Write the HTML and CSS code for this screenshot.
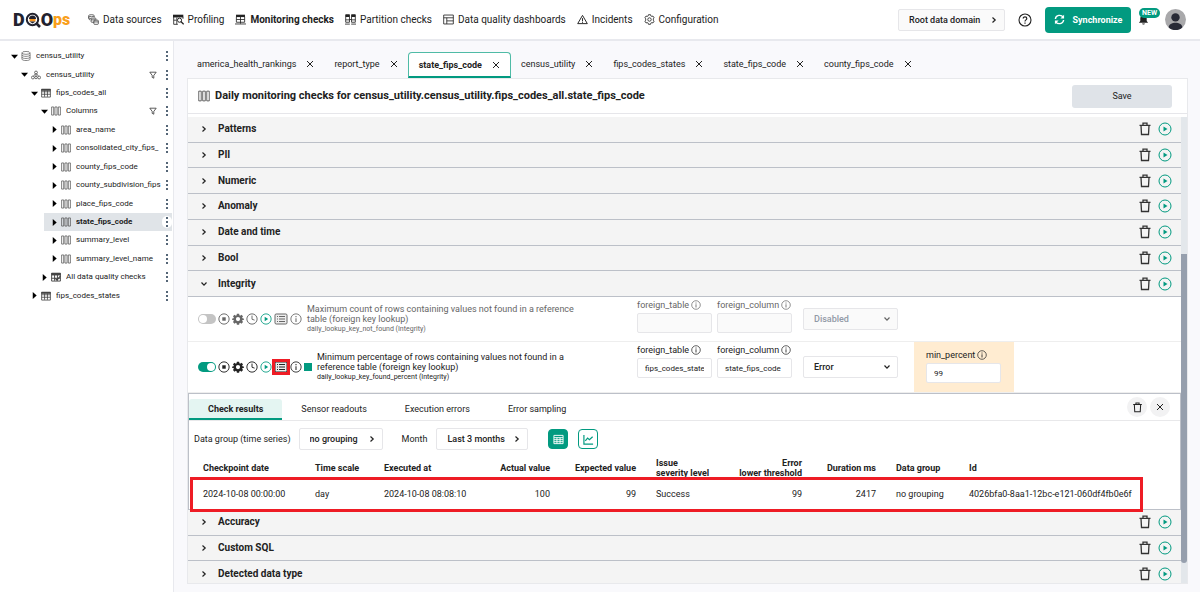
FILE: index.html
```html
<!DOCTYPE html>
<html lang="en">
<head>
<meta charset="utf-8">
<title>DQOps - Monitoring checks</title>
<meta name="viewport" content="width=device-width, initial-scale=1">
<link rel="stylesheet" href="styles.css">
</head>
<body>
<svg class="sprite" aria-hidden="true">
  <symbol id="sources" viewBox="0 0 16 16"><g fill="none" stroke="currentColor"><path d="M3 8.500C1.500 8 1 7.500 1 7V2.500C1 .5 9 .5 9 2.500V5M1 2.500C1 4.500 9 4.500 9 2.500M1 5c0 1 1.500 1.500 3 1.600"/><rect x="4.500" y="6" width="7" height="6" rx="1"/><rect x="8.500" y="9" width="6.500" height="6" rx="1" fill="#fff"/><path d="M4.500 8.500h6M8.500 11.500H15"/></g></symbol>
  <symbol id="profiling" viewBox="0 0 16 16"><path d="M0 1h15v4H0z" fill="currentColor"/><path d="M1 4v11h6M1 9h4M5.500 5v10M14.500 4v3" fill="none" stroke="currentColor" stroke-width="1.200"/><circle cx="9.500" cy="9" r="3" fill="#fff" stroke="currentColor" stroke-width="1.400"/><path d="m11.500 11 4 4" stroke="currentColor" stroke-width="2"/></symbol>
  <symbol id="monitoring" viewBox="0 0 16 16"><path d="M1.500 1h13v3.500h-13z" fill="currentColor"/><path d="M2 4v8h12V4M2 8h12M8 4v10M0 14.500h16" fill="none" stroke="currentColor" stroke-width="1.200"/></symbol>
  <symbol id="partition" viewBox="0 0 16 16"><path d="M1 1h5.500v3.500H1zM9.500 1H15v3.500H9.500z" fill="currentColor"/><path d="M1 1h5.500v11H1zM9.500 1H15v11H9.500zM1 8.500h5.500M9.500 8.500H15M0 14.700h7M9 14.700h7M6.500 8h3" fill="none" stroke="currentColor" stroke-width="1.200"/></symbol>
  <symbol id="dashboard" viewBox="0 0 16 16"><path d="M1 1.500h14v13H1zM1 5.500h14M5.500 5.500v9M5.500 10H15" fill="none" stroke="currentColor" stroke-width="1.200"/></symbol>
  <symbol id="incident" viewBox="0 0 16 16"><path d="M8 2 15 14H1zM8 6v4.500M8 11.300v1.500" fill="none" stroke="currentColor" stroke-width="1.400"/></symbol>
  <symbol id="config" viewBox="0 0 16 16"><path d="M6.500 1h3l.5 1.800 1.300.7 1.800-.5 1.600 2.600L13.500 7v2l1.200 1.400-1.600 2.600-1.800-.5-1.300.7-.5 1.800h-3L6 13.200l-1.300-.7-1.800.5-1.600-2.600L2.500 9V7L1.300 5.600 2.900 3l1.800.5L6 2.800z" fill="none" stroke="currentColor" stroke-width="1.200"/><circle cx="8" cy="8" r="2.500" fill="none" stroke="currentColor" stroke-width="1.200"/></symbol>
  <symbol id="gear" viewBox="0 0 16 16"><path fill="currentColor" fill-rule="evenodd" d="M6.500 1h3l.4 2 1 .5 1.700-1.200 2.100 2.100-1.200 1.700.5 1 2 .4v1.500l-2 .4-.5 1 1.200 1.700-2.100 2.100-1.700-1.200-1 .5-.4 2h-3l-.4-2-1-.5-1.700 1.200-2.100-2.100 1.200-1.700-.5-1-2-.4V7.500l2-.4.5-1-1.200-1.700 2.100-2.100 1.700 1.200 1-.5zM8 5.300a2.800 2.800 0 1 0 0 5.600 2.800 2.800 0 0 0 0-5.600z"/></symbol>
  <symbol id="database" viewBox="0 0 16 16"><g fill="none" stroke="currentColor"><ellipse cx="8" cy="3" rx="6.500" ry="2.300"/><path d="M1.500 3v10c0 3 13 3 13 0V3M1.500 6.300c0 3 13 3 13 0M1.500 9.700c0 3 13 3 13 0"/></g></symbol>
  <symbol id="schema" viewBox="0 0 16 16"><g fill="none" stroke="currentColor" stroke-width="1.200"><circle cx="8" cy="4" r="2.300"/><circle cx="3" cy="12" r="2.300"/><circle cx="8" cy="12" r="2"/><circle cx="13" cy="12" r="2.300"/><path d="M8 6v4M7 6 4 10M9 6l3 4"/></g></symbol>
  <symbol id="table" viewBox="0 0 16 16"><path d="M.5 1.500h15v3H.5z" fill="currentColor"/><path d="M1 2h14v12.500H1zM1 6h14M1 10h14M5.700 4v10M10.300 4v10" fill="none" stroke="currentColor" stroke-width="1.300"/></symbol>
  <symbol id="checks" viewBox="0 0 16 16"><path d="M.5 1.500h15v4H.5z" fill="currentColor"/><path d="M1 2h14v12.500H1zM1 10h14M5.700 4v10M10.300 4v10" fill="none" stroke="currentColor" stroke-width="1.500"/><path d="m7 10 2.500 3L15 6.500" fill="none" stroke="currentColor" stroke-width="2"/></symbol>
  <symbol id="columns" viewBox="0 0 16 16"><path d="M1 1.500h3.300v13H1zM6.300 1.500h3.400v13H6.300zM11.700 1.500H15v13h-3.300z" fill="none" stroke="currentColor" stroke-width="1.100"/></symbol>
  <symbol id="down" viewBox="0 0 8 8"><path d="M0 2h8L4 6.500z"/></symbol>
  <symbol id="right" viewBox="0 0 8 8"><path d="M2 0v8L6.500 4z"/></symbol>
  <symbol id="filter" viewBox="0 0 10 10"><path d="M1 1.500h8L6 5.500V9L4 8V5.500z" fill="none" stroke="currentColor"/></symbol>
  <symbol id="dots" viewBox="0 0 4 12"><path d="M1 1h2v2H1zM1 5h2v2H1zM1 9h2v2H1z" fill="currentColor"/></symbol>
  <symbol id="close" viewBox="0 0 8 8"><path d="m1 1 6 6M7 1 1 7" stroke="currentColor"/></symbol>
  <symbol id="chevron" viewBox="0 0 10 10"><path d="m3.500 2.500 2.700 2.500-2.700 2.500" fill="none" stroke="currentColor" stroke-width="1.200"/></symbol>
  <symbol id="chevron-down" viewBox="0 0 10 10"><path d="M2.500 3.500 5 6.200l2.500-2.700" fill="none" stroke="currentColor" stroke-width="1.200"/></symbol>
  <symbol id="trash" viewBox="0 0 14 14"><path d="M1.500 3.300h11M5 3V1.200h4V3M3 3.500l.5 9h7l.5-9" fill="none" stroke="currentColor" stroke-width="1.300"/></symbol>
  <symbol id="play" viewBox="0 0 14 14"><circle cx="7" cy="7" r="6" fill="none" stroke="currentColor"/><path d="M5.500 4.500v5L9.500 7z" fill="currentColor"/></symbol>
  <symbol id="stop" viewBox="0 0 14 14"><circle cx="7" cy="7" r="6" fill="none" stroke="currentColor" stroke-width="1.100"/><path d="M5 5h4v4H5z" fill="currentColor"/></symbol>
  <symbol id="clock" viewBox="0 0 14 14"><path d="M7 3v4.300l3 1" fill="none" stroke="currentColor" stroke-width="1.100"/><circle cx="7" cy="7" r="6" fill="none" stroke="currentColor" stroke-width="1.100"/></symbol>
  <symbol id="list" viewBox="0 0 14 12"><rect x="1" y="1" width="12" height="10" rx="1.200" fill="#eee" stroke="currentColor"/><path d="M3 3.500h1M5 3.500h6M3 6h1M5 6h6M3 8.500h1M5 8.500h6" stroke="currentColor"/></symbol>
  <symbol id="info" viewBox="0 0 14 14"><circle cx="7" cy="7" r="6" fill="none" stroke="currentColor"/><path d="M7 6v4.500M7 3.500V5" stroke="currentColor" stroke-width="1.200"/></symbol>
  <symbol id="chart" viewBox="0 0 12 12"><path d="M1 1v10h10M2.500 7.500l2.500-3 2 1.800L10.500 3" fill="none" stroke="currentColor" stroke-width="1.300"/></symbol>
  <symbol id="grid" viewBox="0 0 12 12"><path d="M1 1.500h10v9H1zM1 4h10M1 6.200h10M1 8.400h10M4.300 4v6.500M7.700 4v6.500" fill="none" stroke="currentColor"/></symbol>
  <symbol id="sync" viewBox="0 0 12 12"><path d="M1.500 5.500C2 .8 8 .3 10 3.500M10.500 6.500C10 11.200 4 11.700 2 8.500" fill="none" stroke="currentColor" stroke-width="1.500"/><path d="M11 .8v4H7zM1 11.200v-4h4z" fill="currentColor"/></symbol>
  <symbol id="help" viewBox="0 0 14 14"><circle cx="7" cy="7" r="6" fill="none" stroke="currentColor" stroke-width="1.100"/><path d="M5.200 5.500c0-2.300 3.600-2.300 3.600 0C8.800 7 7 6.800 7 8.500M7 9.500v1.300" fill="none" stroke="currentColor" stroke-width="1.200"/></symbol>
  <symbol id="bell" viewBox="0 0 12 12"><path d="M1 9.500 2.500 7.500V4.500c0-4 7-4 7 0v3L11 9.500zM4.500 10.300h3c0 1.600-3 1.600-3 0z" fill="currentColor"/></symbol>
  <symbol id="avatar" viewBox="0 0 20 20"><circle cx="10" cy="10" r="10" fill="#a9a9ab"/><circle cx="10" cy="8" r="4" fill="#282a36"/><path d="M3.500 17.500c0-6 13-6 13 0C13 20.800 7 20.800 3.500 17.500z" fill="#282a36"/></symbol>
</svg>

<header class="topbar">
  <a class="logo" href="#" aria-label="DQOps home">
    <span>D</span><svg class="logo-q" viewBox="0 0 16 16"><circle cx="7.500" cy="7.500" r="5.700" fill="#fff" stroke="#22222e" stroke-width="2"/><path d="M4 7a3.500 3.500 0 0 1 7 0z" fill="#22222e"/><path d="M4.500 7h6v2.500h-6z" fill="#f7941d"/><path d="M4.500 9.500h6l-3 2z" fill="#22222e"/><path d="m11 11 4 4" stroke="#22222e" stroke-width="2.600"/></svg><span>O</span><span class="logo-ps">ps</span>
  </a>
  <nav class="nav">
    <a href="#"><svg><use href="#sources"/></svg>Data sources</a>
    <a href="#"><svg><use href="#profiling"/></svg>Profiling</a>
    <a href="#" class="active"><svg><use href="#monitoring"/></svg>Monitoring checks</a>
    <a href="#"><svg><use href="#partition"/></svg>Partition checks</a>
    <a href="#"><svg><use href="#dashboard"/></svg>Data quality dashboards</a>
    <a href="#"><svg><use href="#incident"/></svg>Incidents</a>
    <a href="#"><svg><use href="#config"/></svg>Configuration</a>
  </nav>
  <div class="tools">
    <div class="select domain"><select aria-label="Data domain"><option>Root data domain</option></select><svg><use href="#chevron"/></svg></div>
    <button class="icon-btn help" aria-label="Help"><svg><use href="#help"/></svg></button>
    <button class="sync"><svg><use href="#sync"/></svg>Synchronize</button>
    <button class="icon-btn bell" aria-label="Notifications"><svg><use href="#bell"/></svg><span class="badge">NEW</span></button>
    <button class="icon-btn avatar" aria-label="Account"><svg><use href="#avatar"/></svg></button>
  </div>
</header>

<div class="body">
  <aside class="sidebar">
    <ul class="tree">
      <li class="d0"><svg class="arrow"><use href="#down"/></svg><svg class="kind"><use href="#database"/></svg><a href="#">census_utility</a><button aria-label="Menu"><svg class="dots"><use href="#dots"/></svg></button></li>
      <li class="d1"><svg class="arrow"><use href="#down"/></svg><svg class="kind"><use href="#schema"/></svg><a href="#">census_utility</a><button aria-label="Filter"><svg class="filter"><use href="#filter"/></svg></button><button aria-label="Menu"><svg class="dots"><use href="#dots"/></svg></button></li>
      <li class="d2"><svg class="arrow"><use href="#down"/></svg><svg class="kind"><use href="#table"/></svg><a href="#">fips_codes_all</a><button aria-label="Menu"><svg class="dots"><use href="#dots"/></svg></button></li>
      <li class="d3"><svg class="arrow"><use href="#down"/></svg><svg class="kind"><use href="#columns"/></svg><a href="#">Columns</a><button aria-label="Filter"><svg class="filter"><use href="#filter"/></svg></button><button aria-label="Menu"><svg class="dots"><use href="#dots"/></svg></button></li>
      <li class="d4"><svg class="arrow"><use href="#right"/></svg><svg class="kind"><use href="#columns"/></svg><a href="#">area_name</a><button aria-label="Menu"><svg class="dots"><use href="#dots"/></svg></button></li>
      <li class="d4"><svg class="arrow"><use href="#right"/></svg><svg class="kind"><use href="#columns"/></svg><a href="#">consolidated_city_fips_</a><button aria-label="Menu"><svg class="dots"><use href="#dots"/></svg></button></li>
      <li class="d4"><svg class="arrow"><use href="#right"/></svg><svg class="kind"><use href="#columns"/></svg><a href="#">county_fips_code</a><button aria-label="Menu"><svg class="dots"><use href="#dots"/></svg></button></li>
      <li class="d4"><svg class="arrow"><use href="#right"/></svg><svg class="kind"><use href="#columns"/></svg><a href="#">county_subdivision_fips</a><button aria-label="Menu"><svg class="dots"><use href="#dots"/></svg></button></li>
      <li class="d4"><svg class="arrow"><use href="#right"/></svg><svg class="kind"><use href="#columns"/></svg><a href="#">place_fips_code</a><button aria-label="Menu"><svg class="dots"><use href="#dots"/></svg></button></li>
      <li class="d4 selected"><svg class="arrow"><use href="#right"/></svg><svg class="kind"><use href="#columns"/></svg><a href="#">state_fips_code</a><button aria-label="Menu"><svg class="dots"><use href="#dots"/></svg></button></li>
      <li class="d4"><svg class="arrow"><use href="#right"/></svg><svg class="kind"><use href="#columns"/></svg><a href="#">summary_level</a><button aria-label="Menu"><svg class="dots"><use href="#dots"/></svg></button></li>
      <li class="d4"><svg class="arrow"><use href="#right"/></svg><svg class="kind"><use href="#columns"/></svg><a href="#">summary_level_name</a><button aria-label="Menu"><svg class="dots"><use href="#dots"/></svg></button></li>
      <li class="d3"><svg class="arrow"><use href="#right"/></svg><svg class="kind"><use href="#checks"/></svg><a href="#">All data quality checks</a><button aria-label="Menu"><svg class="dots"><use href="#dots"/></svg></button></li>
      <li class="d2"><svg class="arrow"><use href="#right"/></svg><svg class="kind"><use href="#table"/></svg><a href="#">fips_codes_states</a><button aria-label="Menu"><svg class="dots"><use href="#dots"/></svg></button></li>
    </ul>
  </aside>

  <main class="main">
    <div class="tabs">
      <div class="tab"><a href="#">america_health_rankings</a><button aria-label="Close"><svg><use href="#close"/></svg></button></div>
      <div class="tab"><a href="#">report_type</a><button aria-label="Close"><svg><use href="#close"/></svg></button></div>
      <div class="tab active"><a href="#">state_fips_code</a><button aria-label="Close"><svg><use href="#close"/></svg></button></div>
      <div class="tab"><a href="#">census_utility</a><button aria-label="Close"><svg><use href="#close"/></svg></button></div>
      <div class="tab"><a href="#">fips_codes_states</a><button aria-label="Close"><svg><use href="#close"/></svg></button></div>
      <div class="tab"><a href="#">state_fips_code</a><button aria-label="Close"><svg><use href="#close"/></svg></button></div>
      <div class="tab"><a href="#">county_fips_code</a><button aria-label="Close"><svg><use href="#close"/></svg></button></div>
    </div>

    <div class="card">
      <div class="card-head">
        <svg><use href="#columns"/></svg>
        <h1>Daily monitoring checks for census_utility.census_utility.fips_codes_all.state_fips_code</h1>
        <button class="save">Save</button>
      </div>
      <div class="scroller">
        <div class="content">
          <div class="groups">
            <div class="group"><svg class="chev"><use href="#chevron"/></svg><h2>Patterns</h2><button aria-label="Delete"><svg class="trash"><use href="#trash"/></svg></button><button aria-label="Run"><svg class="play"><use href="#play"/></svg></button></div>
            <div class="group"><svg class="chev"><use href="#chevron"/></svg><h2>PII</h2><button aria-label="Delete"><svg class="trash"><use href="#trash"/></svg></button><button aria-label="Run"><svg class="play"><use href="#play"/></svg></button></div>
            <div class="group"><svg class="chev"><use href="#chevron"/></svg><h2>Numeric</h2><button aria-label="Delete"><svg class="trash"><use href="#trash"/></svg></button><button aria-label="Run"><svg class="play"><use href="#play"/></svg></button></div>
            <div class="group"><svg class="chev"><use href="#chevron"/></svg><h2>Anomaly</h2><button aria-label="Delete"><svg class="trash"><use href="#trash"/></svg></button><button aria-label="Run"><svg class="play"><use href="#play"/></svg></button></div>
            <div class="group"><svg class="chev"><use href="#chevron"/></svg><h2>Date and time</h2><button aria-label="Delete"><svg class="trash"><use href="#trash"/></svg></button><button aria-label="Run"><svg class="play"><use href="#play"/></svg></button></div>
            <div class="group"><svg class="chev"><use href="#chevron"/></svg><h2>Bool</h2><button aria-label="Delete"><svg class="trash"><use href="#trash"/></svg></button><button aria-label="Run"><svg class="play"><use href="#play"/></svg></button></div>
            <div class="group"><svg class="chev"><use href="#chevron-down"/></svg><h2>Integrity</h2><button aria-label="Delete"><svg class="trash"><use href="#trash"/></svg></button><button aria-label="Run"><svg class="play"><use href="#play"/></svg></button></div>
          </div>

          <div class="check off">
            <div class="check-main">
              <div class="actions">
                <input type="checkbox" class="toggle" aria-label="Enable daily_lookup_key_not_found">
                <button aria-label="Disable"><svg><use href="#stop"/></svg></button>
                <button aria-label="Settings"><svg><use href="#gear"/></svg></button>
                <button aria-label="Schedule"><svg><use href="#clock"/></svg></button>
                <button aria-label="Run" class="green"><svg><use href="#play"/></svg></button>
                <button aria-label="Results" class="list"><svg><use href="#list"/></svg></button>
                <button aria-label="Info"><svg><use href="#info"/></svg></button>
              </div>
              <div class="desc">Maximum count of rows containing values not found in a reference table (foreign key lookup)<small>daily_lookup_key_not_found (Integrity)</small></div>
            </div>
            <div class="params">
              <div class="field"><label for="ft1">foreign_table <svg><use href="#info"/></svg></label><input id="ft1" type="text" disabled></div>
              <div class="field"><label for="fc1">foreign_column <svg><use href="#info"/></svg></label><input id="fc1" type="text" disabled></div>
            </div>
            <div class="select level"><select aria-label="Severity" disabled><option>Disabled</option></select><svg><use href="#chevron-down"/></svg></div>
          </div>

          <div class="check">
            <div class="check-main">
              <div class="actions">
                <input type="checkbox" class="toggle" checked aria-label="Enable daily_lookup_key_found_percent">
                <button aria-label="Disable"><svg><use href="#stop"/></svg></button>
                <button aria-label="Settings"><svg><use href="#gear"/></svg></button>
                <button aria-label="Schedule"><svg><use href="#clock"/></svg></button>
                <button aria-label="Run" class="green"><svg><use href="#play"/></svg></button>
                <button aria-label="Results" class="list marked"><svg><use href="#list"/></svg></button>
                <button aria-label="Info"><svg><use href="#info"/></svg></button>
                <span class="status"></span>
              </div>
              <div class="desc">Minimum percentage of rows containing values not found in a reference table (foreign key lookup)<small>daily_lookup_key_found_percent (Integrity)</small></div>
            </div>
            <div class="params">
              <div class="field"><label for="ft2">foreign_table <svg><use href="#info"/></svg></label><input id="ft2" type="text" value="fips_codes_states"></div>
              <div class="field"><label for="fc2">foreign_column <svg><use href="#info"/></svg></label><input id="fc2" type="text" value="state_fips_code"></div>
            </div>
            <div class="select level"><select aria-label="Severity"><option>Error</option></select><svg><use href="#chevron-down"/></svg></div>
            <div class="threshold">
              <div class="field"><label for="mp">min_percent <svg><use href="#info"/></svg></label><input id="mp" type="text" value="99"></div>
            </div>
          </div>

          <section class="results">
            <div class="result-tabs">
              <button class="active">Check results</button>
              <button>Sensor readouts</button>
              <button>Execution errors</button>
              <button>Error sampling</button>
              <div class="round">
                <button aria-label="Delete results"><svg class="bin"><use href="#trash"/></svg></button>
                <button aria-label="Close results"><svg class="cross"><use href="#close"/></svg></button>
              </div>
            </div>
            <div class="filters">
              <label for="grp">Data group (time series)</label>
              <div class="select grouping"><select id="grp"><option>no grouping</option></select><svg><use href="#chevron"/></svg></div>
              <label for="mon" class="month">Month</label>
              <div class="select period"><select id="mon"><option>Last 3 months</option></select><svg><use href="#chevron"/></svg></div>
              <button class="view on" aria-label="Table view"><svg><use href="#grid"/></svg></button>
              <button class="view" aria-label="Chart view"><svg><use href="#chart"/></svg></button>
            </div>
            <table class="data">
              <colgroup><col class="c1"><col class="c2"><col class="c3"><col class="c4"><col class="c5"><col class="c6"><col class="c7"><col class="c8"><col class="c9"><col></colgroup>
              <thead><tr><th>Checkpoint date</th><th>Time scale</th><th>Executed at</th><th class="num">Actual value</th><th class="num">Expected value</th><th>Issue<br>severity level</th><th class="num">Error<br>lower threshold</th><th class="num">Duration ms</th><th>Data group</th><th>Id</th></tr></thead>
              <tbody><tr><td>2024-10-08 00:00:00</td><td>day</td><td>2024-10-08 08:08:10</td><td class="num">100</td><td class="num">99</td><td>Success</td><td class="num">99</td><td class="num">2417</td><td>no grouping</td><td>4026bfa0-8aa1-12bc-e121-060df4fb0e6f</td></tr></tbody>
            </table>
            <div class="highlight"></div>
          </section>

          <div class="groups rest">
            <div class="group"><svg class="chev"><use href="#chevron"/></svg><h2>Accuracy</h2><button aria-label="Delete"><svg class="trash"><use href="#trash"/></svg></button><button aria-label="Run"><svg class="play"><use href="#play"/></svg></button></div>
            <div class="group"><svg class="chev"><use href="#chevron"/></svg><h2>Custom SQL</h2><button aria-label="Delete"><svg class="trash"><use href="#trash"/></svg></button><button aria-label="Run"><svg class="play"><use href="#play"/></svg></button></div>
            <div class="group"><svg class="chev"><use href="#chevron"/></svg><h2>Detected data type</h2><button aria-label="Delete"><svg class="trash"><use href="#trash"/></svg></button><button aria-label="Run"><svg class="play"><use href="#play"/></svg></button></div>
          </div>
        </div>
        <div class="scrollbar"><div class="thumb"></div></div>
      </div>
    </div>
  </main>
</div>
</body>
</html>
```
FILE: styles.css
```css
* { box-sizing: border-box; }
body { margin: 0; height: 100vh; display: flex; flex-direction: column; overflow: hidden; background: #fff; color: #222; font: 9px/12px Roboto, "Liberation Sans", sans-serif; }
a { color: inherit; text-decoration: none; }
button { padding: 0; border: 0; background: none; color: inherit; font: inherit; display: flex; align-items: center; justify-content: center; }
input, select { font: inherit; color: inherit; }
svg { display: block; flex: none; }
h1, h2 { margin: 0; }
.sprite { position: absolute; width: 0; height: 0; }

/* Top bar */
.topbar { flex: none; height: 41px; padding: 0 14px 0 13px; display: flex; align-items: center; border-bottom: 2px solid #e8e9ee; }
.logo { width: 75px; display: flex; align-items: center; font-size: 18px; line-height: 20px; font-weight: 900; color: #22222e; }
.logo-q { width: 16px; height: 16px; }
.logo-ps { color: #f9a01b; font-size: 16px; }
.nav { flex: 1; display: flex; gap: 11px; font-size: 10px; white-space: nowrap; }
.nav a { display: flex; align-items: center; gap: 5px; }
.nav svg { width: 11px; height: 11px; margin-right: -1px; }
.nav .active { font-weight: 700; }
.tools { display: flex; align-items: center; }
.select { position: relative; height: 22px; }
.select select { width: 100%; height: 100%; padding: 0 10px; border: 1px solid #e6e6e9; border-radius: 2px; background: #fff; appearance: none; font-weight: 500; }
.select svg { position: absolute; right: 6px; top: 6px; width: 10px; height: 10px; pointer-events: none; }
.domain { width: 107px; }
.domain select { background: #fafafa; }
.help { margin: 0 13px; }
.help svg { width: 14px; height: 14px; }
.sync { width: 86px; height: 26px; gap: 8px; border-radius: 4px; background: #029a80; color: #fff; font-weight: 700; }
.sync svg { width: 11px; height: 11px; }
.bell { position: relative; margin: 0 16px 0 7px; }
.bell svg { width: 11px; height: 11px; }
.badge { position: absolute; left: 1px; top: -6px; padding: 0 3px; border-radius: 5px; background: #029a80; color: #fff; font-size: 7px; line-height: 10px; font-weight: 700; }
.avatar svg { width: 21px; height: 21px; }

/* Sidebar tree */
.body { flex: 1; min-height: 0; display: flex; }
.sidebar { flex: none; width: 174px; padding-top: 6px; border-right: 1px solid #e8e9ee; }
.tree { height: 258px; margin: 0; padding: 0 1px 0 0; list-style: none; display: grid; grid-auto-rows: 1fr; font-size: 8px; }
.tree li { display: flex; align-items: center; min-width: 0; }
.tree a { flex: 1; min-width: 0; overflow: hidden; white-space: nowrap; }
.d0 { margin-left: 7px; }
.d1 { margin-left: 17px; }
.d2 { margin-left: 27px; }
.d3 { margin-left: 37px; }
.tree .d4 { margin-left: 44px; padding-left: 3px; }
.tree .selected { background: #e0e4e8; font-weight: 700; }
.arrow { width: 7px; height: 7px; margin: 0 3px 0 4px; }
.kind { width: 10px; height: 10px; margin-right: 5px; color: #444; }
.dots { width: 4px; height: 12px; margin: 0 3px; color: #567; }
.filter { width: 8px; height: 8px; margin-right: 5px; color: #333; }
.selected button { height: 12px; border-radius: 6px; background: #fff; }

/* Main column */
.main { flex: 1; min-width: 0; display: flex; flex-direction: column; padding: 11px 12px 8px 13px; background: #f9f9fc; }
.tabs { display: flex; height: 26px; }
.tab { display: flex; align-items: center; gap: 10px; padding: 0 10px; border-bottom: 2px solid transparent; }
.tab svg { width: 8px; height: 8px; }
.tab.active { padding: 0 10px; border: 1px solid #4fbba6; border-bottom: 2px solid #029a80; border-radius: 4px 4px 0 0; background: #fff; font-weight: 700; }
.card { flex: 1; min-height: 0; display: flex; flex-direction: column; border: 1px solid #e8e9ec; background: #fff; }
.card-head { flex: none; height: 35px; padding: 0 15px 0 10px; display: flex; align-items: center; gap: 5px; border-bottom: 1px solid #e6e6ea; }
.card-head svg { width: 12px; height: 12px; color: #444; }
.card-head h1 { flex: 1; font-size: 11px; font-weight: 700; }
.save { width: 100px; height: 23px; border-radius: 3px; background: #dfe3e8; }
.scroller { flex: 1; min-height: 0; display: flex; padding-top: 3px; overflow: hidden; }
.content { flex: 1; min-width: 0; }
.scrollbar { flex: none; width: 6px; padding-top: 137px; background: #e3e7eb; }
.thumb { height: 309px; border-radius: 0 0 3px 3px; background: #969fad; }

.groups { display: grid; grid-auto-rows: 1fr; height: 180px; }
.groups.rest { height: 77px; }
.group { display: flex; align-items: center; padding: 0 9px 0 11px; border-bottom: 1px solid #bcc0c8; background: #f4f4f4; }
.chev { width: 10px; height: 10px; }
.group h2 { flex: 1; margin-left: 9px; font-size: 10px; font-weight: 700; }
.trash { width: 14px; height: 14px; margin-right: 6px; color: #333; }
.play { width: 14px; height: 14px; color: #029a80; }

/* Check rows */
.check { display: grid; grid-template-columns: minmax(0, 449fr) 166px 111px minmax(0, 267fr); align-items: center; min-height: 45px; border-bottom: 1px solid #eee; }
.check-main { display: flex; align-items: center; padding-left: 10px; }
.check.off { color: #666; }
.actions { display: flex; align-items: center; gap: 2px; margin-right: 5px; }
.actions svg { width: 12px; height: 12px; }
.actions .list svg { width: 14px; }
.toggle { appearance: none; width: 18px; height: 10px; margin: 0; border-radius: 5px; background: #c4c4c4; display: flex; align-items: center; padding: 0 1px; }
.toggle::before { content: ""; width: 8px; height: 8px; border-radius: 50%; background: #fff; }
.toggle:checked { background: #029a80; justify-content: flex-end; }
.green { color: #029a80; }
.status { width: 8px; height: 8px; background: #029a80; }
.marked { outline: 3px solid #ee1c25; outline-offset: -1px; }
.desc { width: 268px; line-height: 10px; }
.desc small { display: block; font-size: 7px; line-height: 10px; }
.params { align-self: start; display: flex; gap: 5px; padding-top: 2px; }
.field { width: 75px; }
.field label { display: flex; align-items: center; gap: 2px; height: 12px; white-space: nowrap; }
.field svg { width: 10px; height: 10px; }
.field input { display: block; width: 100%; height: 20px; margin-top: 2px; padding: 0 7px; border: 1px solid #e6e6e9; border-radius: 2px; background: #fff; font-size: 8px; }
.field input:disabled { background: #fafafa; }
.level { width: 95px; }
.level select:disabled { background: #fafafa; color: #9199a6; opacity: 1; }
.threshold { width: 100px; height: 50px; padding: 7px 12px; background: #ffecd1; }

/* Results panel */
.results { position: relative; border: 1px solid #bcc0c8; background: #fff; }
.result-tabs { display: flex; align-items: flex-end; height: 27px; border-bottom: 1px solid #e8e8ea; }
.result-tabs > button { height: 21px; padding: 0 19px; border-bottom: 2px solid transparent; }
.result-tabs > .active { background: #e4f5f2; border-bottom-color: #029a80; border-radius: 3px 3px 0 0; font-weight: 700; }
.round { align-self: center; margin-left: auto; margin-right: 10px; display: flex; gap: 3px; }
.round button { width: 20px; height: 20px; border-radius: 50%; background: #f2f2f3; }
.bin { width: 11px; height: 11px; }
.cross { width: 8px; height: 8px; }
.filters { display: flex; align-items: center; height: 36px; padding-left: 5px; }
.grouping { width: 84px; margin-left: 8px; }
.month { margin-left: 19px; }
.period { width: 92px; margin: 0 20px 0 9px; }
.view { width: 20px; height: 20px; margin-right: 10px; border: 1px solid #029a80; border-radius: 4px; color: #029a80; }
.view.on { background: #029a80; color: #fff; }
.view svg { width: 11px; height: 11px; }
.data { width: 100%; padding-left: 4px; border-spacing: 0; table-layout: fixed; }
.data th, .data td { padding: 0 10px; text-align: left; white-space: nowrap; }
.data th { height: 22px; font-weight: 700; line-height: 10px; }
.data td { height: 30px; }
.data .num { text-align: right; }
.c1 { width: 112px; }
.c2 { width: 69px; }
.c3 { width: 103px; }
.c4 { width: 83px; }
.c5 { width: 86px; }
.c6 { width: 81px; }
.c7 { width: 85px; }
.c8 { width: 74px; }
.c9 { width: 73px; }
.highlight { position: absolute; left: 1px; right: 37px; bottom: -3px; height: 35px; border: 3px solid #ee1c25; }
```
